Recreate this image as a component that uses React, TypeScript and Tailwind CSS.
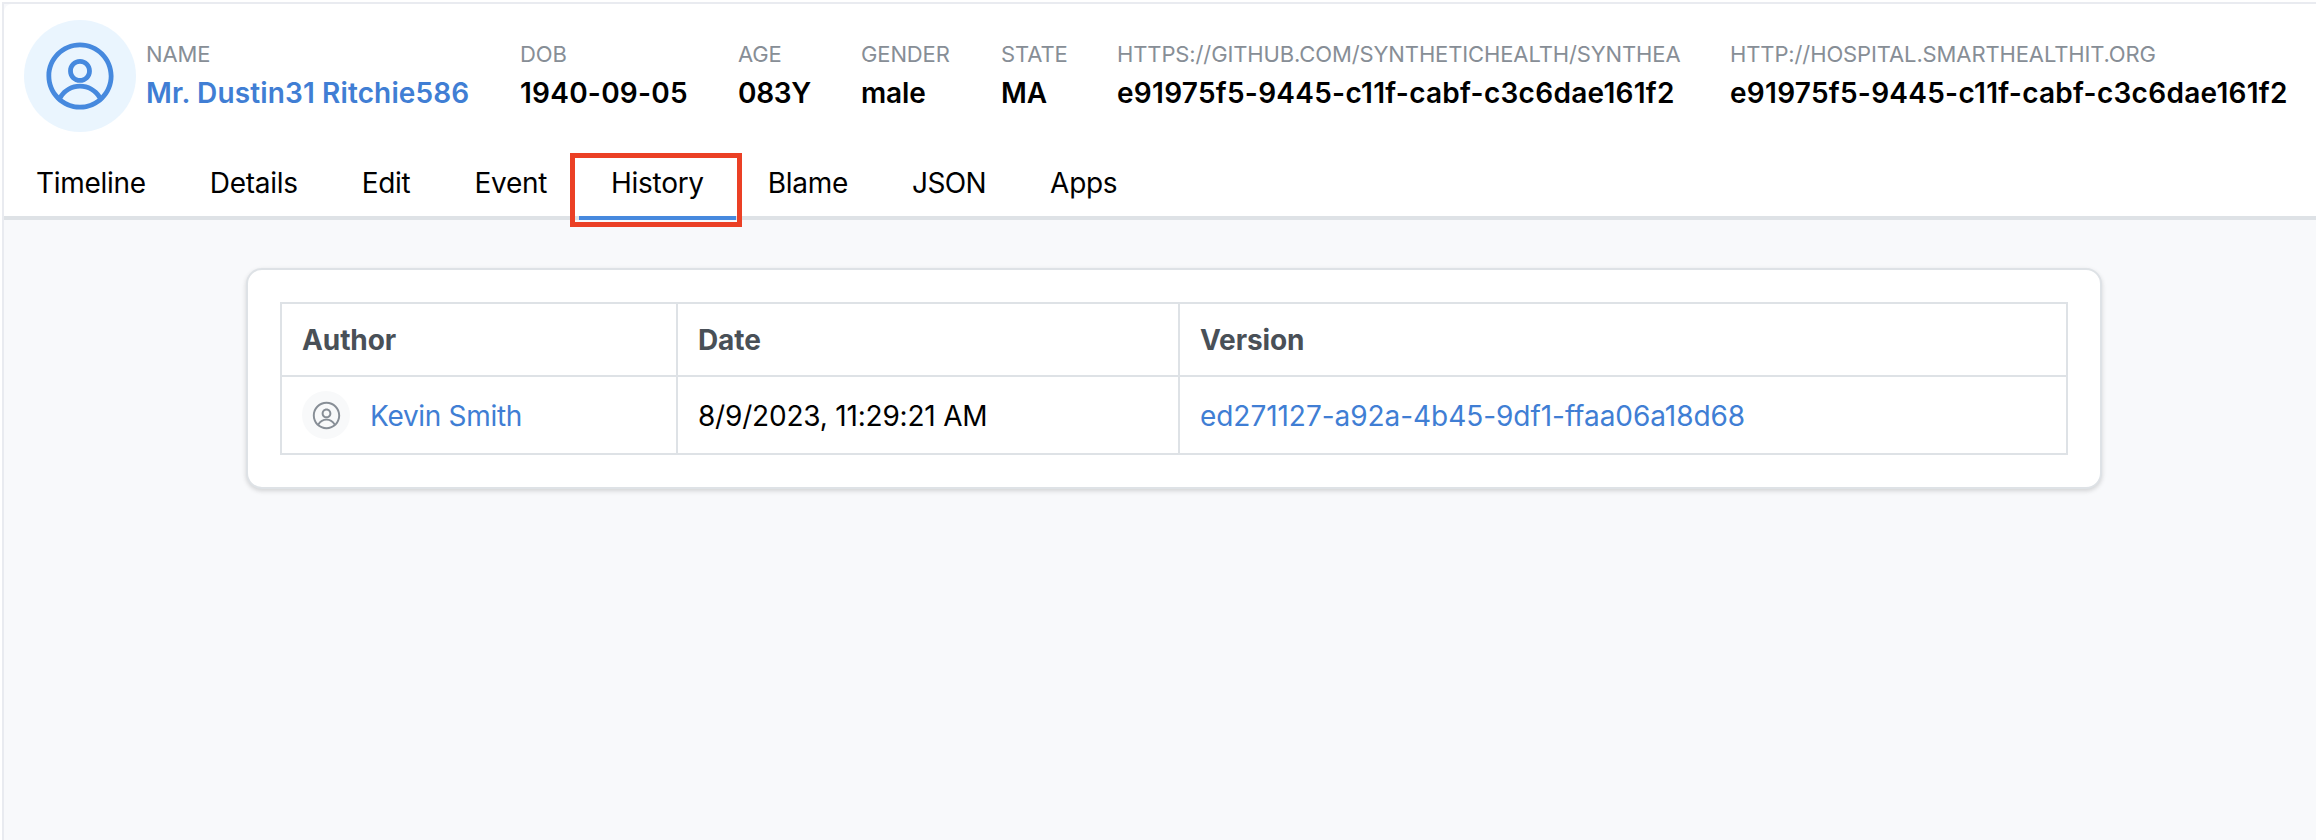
import React from 'react';

const fields = [
  { label: 'Name', value: 'Mr. Dustin31 Ritchie586', width: 'w-[374px]', color: 'text-[#407ed4]', tracking: 'tracking-[0.13px]' },
  { label: 'DOB', value: '1940-09-05', width: 'w-[218px]', color: 'text-black', tracking: 'tracking-[0.25px]' },
  { label: 'Age', value: '083Y', width: 'w-[123px]', color: 'text-black', tracking: 'tracking-[-0.3px]' },
  { label: 'Gender', value: 'male', width: 'w-[140px]', color: 'text-black', tracking: 'tracking-[-0.1px]' },
  { label: 'State', value: 'MA', width: 'w-[116px]', color: 'text-black', tracking: 'tracking-normal' },
  {
    label: 'https://github.com/synthetichealth/synthea',
    value: 'e91975f5-9445-c11f-cabf-c3c6dae161f2',
    width: 'w-[613px]',
    color: 'text-black',
    tracking: 'tracking-[0.28px]',
  },
  {
    label: 'http://hospital.smarthealthit.org',
    value: 'e91975f5-9445-c11f-cabf-c3c6dae161f2',
    width: 'w-[580px]',
    color: 'text-black',
    tracking: 'tracking-[0.28px]',
  },
];

const tabs = ['Timeline', 'Details', 'Edit', 'Event', 'History', 'Blame', 'JSON', 'Apps'];

function PersonIcon({ className }: { className: string }) {
  return (
    <svg viewBox="0 0 15 15" fill="currentColor" className={className} aria-hidden="true">
      <path
        fillRule="evenodd"
        clipRule="evenodd"
        d="M0.877014 7.49988C0.877014 3.84219 3.84216 0.877045 7.49985 0.877045C11.1575 0.877045 14.1227 3.84219 14.1227 7.49988C14.1227 11.1575 11.1575 14.1227 7.49985 14.1227C3.84216 14.1227 0.877014 11.1575 0.877014 7.49988ZM7.49985 1.82704C4.36683 1.82704 1.82701 4.36686 1.82701 7.49988C1.82701 8.97196 2.38774 10.3131 3.30727 11.3213C4.19074 9.94119 5.73818 9.02499 7.50023 9.02499C9.26206 9.02499 10.8093 9.94097 11.6929 11.3208C12.6121 10.3127 13.1727 8.97172 13.1727 7.49988C13.1727 4.36686 10.6328 1.82704 7.49985 1.82704ZM10.9818 11.9787C10.2839 10.7795 8.9857 9.97499 7.50023 9.97499C6.01458 9.97499 4.71624 10.7797 4.01845 11.9791C4.97952 12.7272 6.18765 13.1727 7.49985 13.1727C8.81227 13.1727 10.0206 12.727 10.9818 11.9787ZM5.14999 6.50487C5.14999 5.207 6.20212 4.15487 7.49999 4.15487C8.79786 4.15487 9.84999 5.207 9.84999 6.50487C9.84999 7.80274 8.79786 8.85487 7.49999 8.85487C6.20212 8.85487 5.14999 7.80274 5.14999 6.50487ZM7.49999 5.10487C6.72669 5.10487 6.09999 5.73157 6.09999 6.50487C6.09999 7.27817 6.72669 7.90487 7.49999 7.90487C8.27329 7.90487 8.89999 7.27817 8.89999 6.50487C8.89999 5.73157 8.27329 5.10487 7.49999 5.10487Z"
      />
    </svg>
  );
}

function PatientHeader() {
  return (
    <div className="flex h-[132px] shrink-0 items-start pt-4 pl-5">
      <div className="flex size-28 shrink-0 items-center justify-center rounded-full bg-[#eaf5fe] text-[#4689de]">
        <PersonIcon className="size-[76px]" />
      </div>
      <dl className="flex pt-[17px] pl-[10px]">
        {fields.map((field) => (
          <div key={field.label} className={`shrink-0 whitespace-nowrap ${field.width}`}>
            <dt className="text-[22px] leading-[35px] tracking-[-0.12px] text-[#878e96] uppercase">{field.label}</dt>
            <dd className={`text-[28px] leading-[43px] font-semibold ${field.color} ${field.tracking}`}>
              {field.value}
            </dd>
          </div>
        ))}
      </dl>
    </div>
  );
}

function Tabs() {
  return (
    <nav className="flex h-[84px] shrink-0 border-b-4 border-[#dee2e6] text-[28px] leading-[43px] tracking-[-0.29px] text-black">
      {tabs.map((tab) => (
        <div
          key={tab}
          className={
            tab === 'History'
              ? 'relative -mb-1 border-b-4 border-[#4689de] px-8 pt-[26px]'
              : tab === 'JSON'
                ? 'px-8 pt-[26px] tracking-[-0.6px]'
                : 'px-8 pt-[26px]'
          }
        >
          {tab}
          {tab === 'History' && (
            <span className="absolute top-[17px] -right-[6px] -bottom-[11px] -left-[9px] border-[5px] border-[#eb4025]" />
          )}
        </div>
      ))}
    </nav>
  );
}

function HistoryTable() {
  return (
    <table className="w-full table-fixed border-collapse text-left text-[28px] leading-[43px]">
      <colgroup>
        <col className="w-[396px]" />
        <col className="w-[502px]" />
        <col />
      </colgroup>
      <thead>
        <tr className="h-[73px]">
          {['Author', 'Date', 'Version'].map((title) => (
            <th
              key={title}
              className="border-2 border-[#dee2e6] px-5 pt-0.5 pb-0 font-bold tracking-[-0.1px] text-[#495057]"
            >
              {title}
            </th>
          ))}
        </tr>
      </thead>
      <tbody>
        <tr className="h-[78px]">
          <td className="border-2 border-[#dee2e6] px-5 py-0">
            <div className="flex items-center gap-5">
              <div className="flex size-12 items-center justify-center rounded-full bg-[#f8f9fa] text-[#878e96]">
                <PersonIcon className="size-[31px]" />
              </div>
              <a className="pt-0.5 tracking-[-0.3px] text-[#407ed4]">Kevin Smith</a>
            </div>
          </td>
          <td className="border-2 border-[#dee2e6] px-5 pt-0.5 pb-0 tracking-[-0.2px] text-black">
            8/9/2023, 11:29:21 AM
          </td>
          <td className="border-2 border-[#dee2e6] px-5 pt-0.5 pb-0 tracking-[-0.05px]">
            <a className="text-[#407ed4]">ed271127-a92a-4b45-9df1-ffaa06a18d68</a>
          </td>
        </tr>
      </tbody>
    </table>
  );
}

export default function App() {
  return (
    <div className="h-[840px] w-[2316px] overflow-hidden bg-white pt-0.5 pl-0.5 font-['Inter',sans-serif]">
      <div className="flex h-full flex-col overflow-hidden border-t-2 border-l-2 border-[#e9ebf0] bg-[#f8f9fb]">
        <div className="flex h-[216px] shrink-0 flex-col rounded-tl-lg bg-white">
          <PatientHeader />
          <Tabs />
        </div>
        <main className="pt-12 pl-[242px]">
          <div className="h-[221px] w-[1856px] rounded-2xl border-2 border-[#dee2e6] bg-white p-8 shadow-[0_2px_6px_rgba(0,0,0,0.06),0_2px_4px_rgba(0,0,0,0.1)]">
            <HistoryTable />
          </div>
        </main>
      </div>
    </div>
  );
}
